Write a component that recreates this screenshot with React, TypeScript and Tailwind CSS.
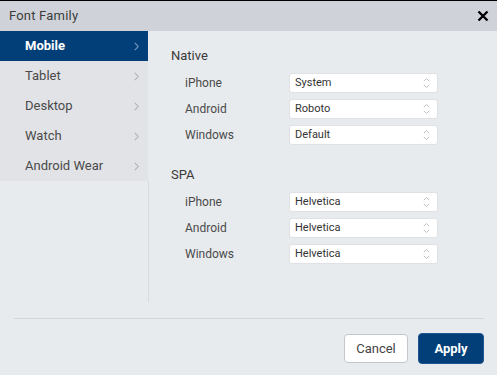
import React from "react";

const Chevron = ({ color }: { color: string }) => (
  <svg width="5" height="9" viewBox="0 0 5 9" fill="none">
    <path d="M0.8 0.8 L4.2 4.5 L0.8 8.2" stroke={color} strokeWidth="1.1" />
  </svg>
);

const UpDown = () => (
  <svg width="7" height="12" viewBox="0 0 7 12" fill="none">
    <path d="M0.8 4.2 L3.5 1.5 L6.2 4.2" stroke="#b5b9be" strokeWidth="0.9" />
    <path d="M0.8 7.8 L3.5 10.5 L6.2 7.8" stroke="#b5b9be" strokeWidth="0.9" />
  </svg>
);

const Select = ({ value }: { value: string }) => (
  <div className="w-[149px] h-[20px] bg-white border border-[#dfe1e4] rounded-[3px] flex items-center justify-between pl-[5px] pr-[7px]">
    <span className="text-[11px] text-[#333]">{value}</span>
    <UpDown />
  </div>
);

const Row = ({ label, value }: { label: string; value: string }) => (
  <div className="flex items-center h-[20px]">
    <span className="w-[118px] pl-[14px] text-[12px] text-[#4a4a4a]">{label}</span>
    <Select value={value} />
  </div>
);

const Section = ({ title, rows }: { title: string; rows: [string, string][] }) => (
  <div>
    <div className="h-[18px] flex items-center text-[13px] text-[#3a3a3a]">{title}</div>
    <div className="mt-[8px] flex flex-col gap-[6px]">
      {rows.map(([l, v]) => (
        <Row key={l} label={l} value={v} />
      ))}
    </div>
  </div>
);

export default function App() {
  const items = ["Mobile", "Tablet", "Desktop", "Watch", "Android Wear"];
  return (
    <div
      className="w-[497px] h-[375px] bg-[#e8ebee] border-t border-black flex flex-col overflow-hidden"
      style={{ fontFamily: "Roboto, 'Liberation Sans', sans-serif" }}
    >
      <div className="h-[30px] shrink-0 bg-[#cfd3d9] flex items-center justify-between pl-[9px] pr-[8px]">
        <span className="text-[13px] text-[#3c3c3c] tracking-[0.2px]">Font Family</span>
        <svg width="12" height="12" viewBox="0 0 12 12">
          <path d="M1.5 1.5 L10.5 10.5 M10.5 1.5 L1.5 10.5" stroke="#000" strokeWidth="2.4" />
        </svg>
      </div>
      <div className="h-[271px] flex shrink-0">
        <div className="w-[149px] flex flex-col">
          {items.map((it, i) => (
            <div
              key={it}
              className={
                i === 0
                  ? "h-[30px] bg-[#023f79] flex items-center justify-between pl-[25px] pr-[9px] w-[148px]"
                  : "h-[30px] bg-[#e1e3e6] flex items-center justify-between pl-[25px] pr-[9px] w-[148px]"
              }
            >
              <span
                className={
                  i === 0
                    ? "text-[13px] font-bold text-white"
                    : "text-[13px] text-[#4a4a4a]"
                }
              >
                {it}
              </span>
              <Chevron color={i === 0 ? "#7e9bc0" : "#aeb2b8"} />
            </div>
          ))}
          <div className="flex-1 border-r border-[#d8dadd]" />
        </div>
        <div className="flex-1 pl-[22px] pt-[16px] flex flex-col gap-[21px]">
          <Section
            title="Native"
            rows={[
              ["iPhone", "System"],
              ["Android", "Roboto"],
              ["Windows", "Default"],
            ]}
          />
          <Section
            title="SPA"
            rows={[
              ["iPhone", "Helvetica"],
              ["Android", "Helvetica"],
              ["Windows", "Helvetica"],
            ]}
          />
        </div>
      </div>
      <div className="mt-[16px] ml-[14px] mr-[13px] border-t border-[#d3d7dc] pt-[14px] flex justify-end items-center gap-[10px]">
        <button className="w-[64px] h-[29px] bg-white border border-[#c3c7cc] rounded-[4px] text-[13px] text-[#444]">
          Cancel
        </button>
        <button className="w-[66px] h-[31px] bg-[#023f79] border border-[#1f5590] rounded-[4px] text-[13px] font-bold text-white">
          Apply
        </button>
      </div>
    </div>
  );
}
